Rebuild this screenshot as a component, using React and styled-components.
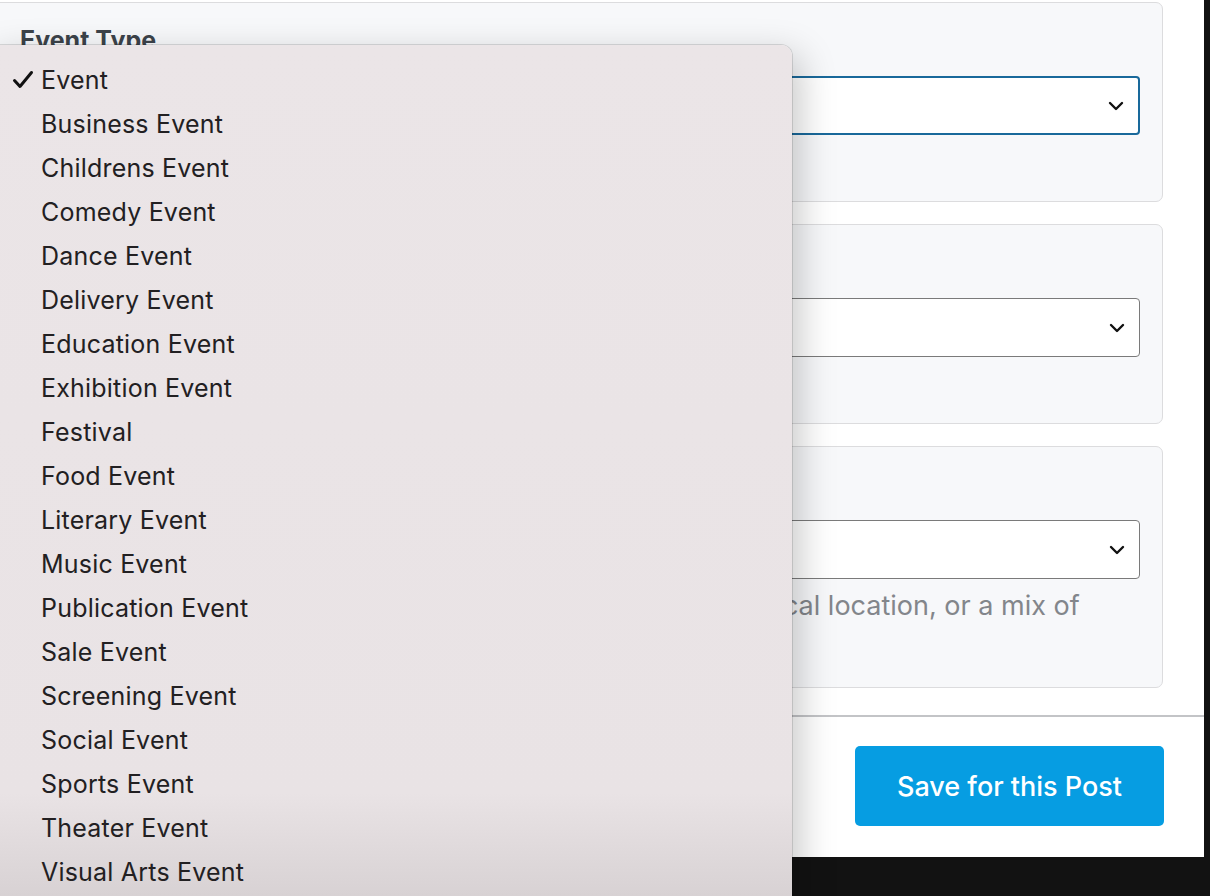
import React from 'react';
import styled, { createGlobalStyle } from 'styled-components';

const GlobalStyle = createGlobalStyle`
  html, body {
    margin: 0;
    padding: 0;
    background: #121212;
    overflow: hidden;
  }
  body {
    font-family: Inter, "Noto Sans", "Liberation Sans", sans-serif;
  }
`;

const Screen = styled.div`
  position: relative;
  width: 1210px;
  height: 896px;
  overflow: hidden;
`;

const Frame = styled.div`
  width: 1204px;
  height: 857px;
  background: #ffffff;
  display: flex;
  flex-direction: column;
  overflow: hidden;
`;

const Fields = styled.div`
  display: flex;
  flex-direction: column;
  gap: 22px;
  padding: 2px 41px 0 0;
  margin-left: -8px;
`;

const Card = styled.section`
  background: #f7f8fa;
  border: 1.5px solid #dcdcde;
  border-radius: 7px;
  padding: 23px 22px 18px 27px;
`;

const Label = styled.div`
  font-size: 25px;
  line-height: 28px;
  font-weight: 700;
  color: #3c434a;
  margin-bottom: 22px;
`;

const Select = styled.div`
  height: 59px;
  box-sizing: border-box;
  background: #ffffff;
  border: ${(p) => (p.$focused ? '2.5px solid #19699b' : '1.5px solid #7a7a7a')};
  border-radius: 4px;
  display: flex;
  align-items: center;
  justify-content: flex-end;
  padding-right: 14px;
`;

const Help = styled.p`
  margin: 6px 0 0;
  font-size: 27px;
  line-height: 42px;
  color: #83868b;
`;

const Divider = styled.hr`
  margin: 27px 0 0;
  border: 0;
  border-top: 2px solid #c3c4c7;
`;

const Footer = styled.div`
  display: flex;
  justify-content: flex-end;
  padding: 29px 40px 0 0;
`;

const SaveButton = styled.button`
  width: 309px;
  height: 80px;
  border: 0;
  border-radius: 5px;
  background: #069de2;
  color: #ffffff;
  font-family: Inter, "Noto Sans", sans-serif;
  font-size: 27px;
  font-weight: 500;
  cursor: pointer;
`;

const Menu = styled.ul`
  position: absolute;
  left: -12px;
  top: 45px;
  width: 804px;
  height: 870px;
  margin: 0;
  padding: 13px 0 0;
  list-style: none;
  box-sizing: border-box;
  border-radius: 0 11px 11px 0;
  background: linear-gradient(to bottom, #ebe5e7 0%, #e9e3e5 86%, #d9d3d5 97%, #d4ced0 100%);
  box-shadow: 0 0 0 1px rgba(0, 0, 0, 0.12), 8px 10px 36px rgba(0, 0, 0, 0.22);
`;

const Item = styled.li`
  height: 44px;
  display: flex;
  align-items: center;
  padding-left: 53px;
  position: relative;
  font-size: 25px;
  letter-spacing: 0.2px;
  color: #222022;
`;

const Check = styled.svg`
  position: absolute;
  left: 24px;
  top: 12px;
`;

const Chevron = () => (
  <svg width="16" height="10" viewBox="0 0 16 10" fill="none">
    <path d="M2 2l6 6 6-6" stroke="#111" strokeWidth="2.4" strokeLinecap="round" strokeLinejoin="round" />
  </svg>
);

const types = [
  'Event', 'Business Event', 'Childrens Event', 'Comedy Event', 'Dance Event',
  'Delivery Event', 'Education Event', 'Exhibition Event', 'Festival', 'Food Event',
  'Literary Event', 'Music Event', 'Publication Event', 'Sale Event', 'Screening Event',
  'Social Event', 'Sports Event', 'Theater Event', 'Visual Arts Event',
];

export default function App() {
  return (
    <Screen>
      <GlobalStyle />
      <Frame>
        <Fields>
          <Card>
            <Label>Event Type</Label>
            <Select $focused><Chevron /></Select>
            <Help>The type of event.</Help>
          </Card>
          <Card>
            <Label>Event Status</Label>
            <Select><Chevron /></Select>
            <Help>The event status.</Help>
          </Card>
          <Card>
            <Label>Event Attendance Mode</Label>
            <Select><Chevron /></Select>
            <Help>Select whether this is an online event, or an event at a physical location, or a mix of both.</Help>
          </Card>
        </Fields>
        <Divider />
        <Footer>
          <SaveButton>Save for this Post</SaveButton>
        </Footer>
      </Frame>
      <Menu>
        {types.map((t, i) => (
          <Item key={t}>
            {i === 0 && (
              <Check width="22" height="19" viewBox="0 0 22 19" fill="none">
                <path d="M2.5 10.5l5.5 6L19.5 2.5" stroke="#111" strokeWidth="3" strokeLinecap="round" strokeLinejoin="round" />
              </Check>
            )}
            {t}
          </Item>
        ))}
      </Menu>
    </Screen>
  );
}
